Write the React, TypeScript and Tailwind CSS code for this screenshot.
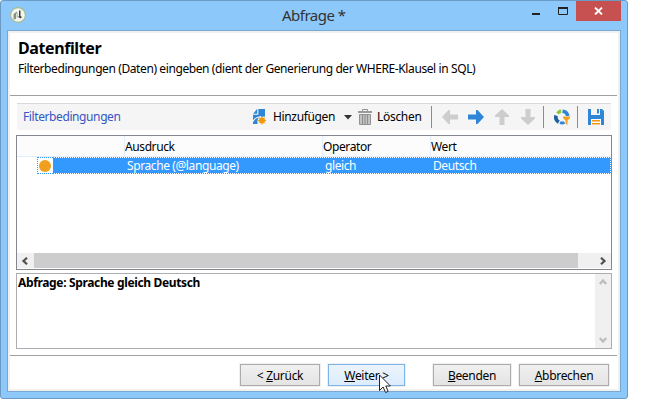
import type { ReactNode } from "react";

function AppIcon() {
  return (
    <svg width="16" height="16" viewBox="0 0 16 16">
      <circle cx="8" cy="8" r="7.4" fill="#f6f6f1" stroke="#a3b98a" strokeWidth="1.1" />
      <path d="M3.500 7 7 4.500v1.500l-1 1v5L3.500 12.500z" fill="#8b8f88" />
      <path d="M6.500 6.500 8 5.500v4.500l-1.500 1.500z" fill="#c3c6bf" />
      <path d="M9 3.500h1.500V9l1.500 1-1.500 1.500L7.500 9.500H9z" fill="#3d423d" />
    </svg>
  );
}

function AddIcon() {
  return (
    <svg width="14" height="16" viewBox="0 0 14 16">
      <path d="M4 0h8v15H0V5z" fill="#2f86d6" />
      <path d="M4.800 0v5.300H0" fill="none" stroke="#f5f5f5" strokeWidth="1.100" />
      <path d="M0 12.500C1.500 9 4 8 8 7.500" fill="none" stroke="#f5f5f5" strokeWidth="1.200" />
      <path d="M4.500 15.500V11L6 8l6.500-.5v8z" fill="#f5f5f5" />
      <circle cx="9" cy="11.500" r="3" fill="#f09a0a" />
      <path d="M9 7.500v8M5 11.500h8M6.200 8.700l5.600 5.600M11.800 8.700l-5.600 5.600" stroke="#f09a0a" strokeWidth="1" />
    </svg>
  );
}

function TrashIcon() {
  return (
    <svg width="14" height="16" viewBox="0 0 14 16">
      <path d="M4.500 2.500v-2h5v2" fill="none" stroke="#929292" />
      <path d="M0 2h14v2H0z" fill="#9a9a9a" />
      <path d="M1.500 5.500h11v10h-11z" fill="#c4c4c4" stroke="#929292" />
      <path d="M4.500 6v9M7 6v9M9.500 6v9" stroke="#8f8f8f" strokeWidth="1.100" />
    </svg>
  );
}

function Arrow({ color, angle }: { color: string; angle: number }) {
  return (
    <svg width="16" height="16" viewBox="0 0 16 16">
      <path transform={`rotate(${angle} 8 8)`} d="M0 5.500h8V1h1.500L16 8l-6.500 7H8v-4.500H0z" fill={color} />
    </svg>
  );
}

function RefreshFilterIcon() {
  return (
    <svg width="16" height="16" viewBox="0 0 16 16">
      <path d="M8.500 2.200A6 6 0 0 1 13.800 7" fill="none" stroke="#2f86d6" strokeWidth="3.600" />
      <path d="M2 6.500a6 6 0 0 0 2.800 6.600" fill="none" stroke="#205f9f" strokeWidth="3.600" />
      <path d="M6 13.700a6 6 0 0 0 4.500-.2" fill="none" stroke="#2f86d6" strokeWidth="3" />
      <path d="M2.200 3.500 5 .8 7.200.5V4L4.500 5.200z" fill="#8cc63f" />
      <path d="M9 7.500h7v1.500l-2.500 2.500V16l-2-1.500v-3L9 9z" fill="#f4a11f" />
    </svg>
  );
}

function SaveIcon() {
  return (
    <svg width="16" height="16" viewBox="0 0 16 16">
      <path d="M0 0h3v6h9V0h2l2 2v14H0z" fill="#2f86d6" />
      <path d="M9 0h2v4.500H9z" fill="#2f86d6" />
      <path d="M3 10h10v6H3z" fill="#fff" />
      <path d="M4 11h8v1.500H4zM4 14h8v1.500H4z" fill="#f4970e" />
    </svg>
  );
}

function Chevron({ color, angle }: { color: string; angle: number }) {
  return (
    <svg width="8" height="8" viewBox="0 0 8 8">
      <path transform={`rotate(${angle} 4 4)`} d="M6 0.800 2.500 4 6 7.200" fill="none" stroke={color} strokeWidth="2.200" />
    </svg>
  );
}

function Separator() {
  return <div className="h-[22px] w-px shrink-0 bg-[#8c8c8c]" />;
}

function Button({ className, children }: { className: string; children: ReactNode }) {
  return (
    <button
      className={`h-[22px] shrink-0 border leading-[19px] whitespace-nowrap shadow-[0_0_0_1px_#f0f0f0] ${className}`}
    >
      {children}
    </button>
  );
}

const grey = "border-[#acacac] bg-linear-to-b from-[#f0f0f0] to-[#e4e4e4]";

export default function App() {
  return (
    <div className="h-[416px] w-[646px] overflow-hidden bg-white font-['Noto_Sans','Open_Sans',sans-serif] text-[12px] tracking-[-0.4px] text-black">
      <div className="flex h-[399px] w-[628px] flex-col rounded-[3px] border border-[#6b9ac4] bg-[#8dc8fa] px-[6px] pb-[6px]">
        <header className="flex h-[29px] shrink-0 items-start">
          <div className="ml-[3px] pt-[6px]"><AppIcon /></div>
          <h1 className="ml-[256px] w-[250px] pt-[4px] text-[15px] leading-[20px] tracking-[-0.5px] text-[#333]">Abfrage *</h1>
          <svg className="mt-[5px] shrink-0" width="38" height="12" viewBox="0 0 38 12">
            <path d="M0 7h8v2H0z" fill="#222" />
            <path d="M26.500 2.500h9v6h-9z" fill="none" stroke="#222" />
            <path d="M26 1h10v2H26z" fill="#222" />
          </svg>
          <div className="ml-auto flex h-[20px] w-[45px] shrink-0 items-center justify-center bg-[#c75050]">
            <svg width="9" height="8" viewBox="0 0 9 8"><path d="M1 .5 8 7.500M8 .5 1 7.500" stroke="#fff" strokeWidth="1.800" /></svg>
          </div>
        </header>

        <main className="flex w-[614px] flex-1 flex-col border border-[#79a9d2] bg-[#f0f0f0] p-[2px]">
          <div className="flex flex-1 flex-col bg-white">
            <section className="mr-[1px] h-[63px] border-b border-[#a0a0a0] pl-[8px]">
              <h2 className="pt-[5px] text-[16px] leading-[20px] font-bold">Datenfilter</h2>
              <p className="mt-[3px] leading-[16px] whitespace-nowrap">
                Filterbedingungen (Daten) eingeben (dient der Generierung der WHERE-Klausel in SQL)
              </p>
            </section>

            <section className="mt-[7px] ml-[7px] flex h-[27px] w-[594px] items-center border-t border-[#d9d9d9] bg-[#f5f5f5]">
              <span className="ml-[6px] w-[230px] text-[#3455c4]">Filterbedingungen</span>
              <AddIcon />
              <span className="ml-[6px] w-[71px] tracking-[-0.35px]">Hinzufügen</span>
              <svg width="8" height="5" viewBox="0 0 8 5"><path d="M0 0h8L4 4.500z" fill="#333" /></svg>
              <div className="ml-[6px]"><TrashIcon /></div>
              <span className="ml-[5px] w-[54px] tracking-[-0.3px]">Löschen</span>
              <Separator />
              <div className="ml-[10px] flex gap-[10px]">
                <Arrow color="#cdcdcd" angle={180} />
                <Arrow color="#2f86d6" angle={0} />
                <Arrow color="#cdcdcd" angle={-90} />
                <Arrow color="#cdcdcd" angle={90} />
              </div>
              <div className="ml-[7px] flex items-center gap-[10px]">
                <Separator />
                <RefreshFilterIcon />
              </div>
              <div className="ml-[7px] flex items-center gap-[10px]">
                <Separator />
                <SaveIcon />
              </div>
            </section>

            <section className="mt-[5px] ml-[6px] flex h-[135px] w-[596px] flex-col border border-[#828790]">
              <div className="flex h-[21px] shrink-0 border-b border-[#e2eefb] bg-[#fcfcfc] leading-[22px]">
                <div className="w-[108px] border-r border-[#e2eefb]" />
                <div className="w-[198px] border-r border-[#e2eefb]">Ausdruck</div>
                <div className="w-[108px] border-r border-[#e2eefb]">Operator</div>
                <div>Wert</div>
              </div>
              <div className="ml-[20px] flex h-[17px] shrink-0 border border-dotted border-white bg-[#3399ff] leading-[16px] text-white">
                <div className="-my-px -ml-px flex w-[16px] items-center border border-r-0 border-dotted border-[#3399ff] bg-white pl-[1px]">
                  <div className="h-[12px] w-[12px] rounded-full bg-[#f0a01e]" />
                </div>
                <span className="ml-[74px] w-[198px]">Sprache (@language)</span>
                <span className="w-[108px]">gleich</span>
                <span>Deutsch</span>
              </div>
              <div className="mt-auto mb-[1px] flex h-[15px] items-center bg-[#f0f0f0]">
                <div className="flex w-[17px] pl-[4px]"><Chevron color="#505050" angle={0} /></div>
                <div className="h-full w-[544px] bg-[#cdcdcd]" />
                <div className="ml-[21px]"><Chevron color="#505050" angle={180} /></div>
              </div>
            </section>

            <section className="mt-[3px] ml-[6px] flex h-[76px] w-[596px] justify-between border border-[#abadb3]">
              <p className="pl-[1px] leading-[18px] font-bold tracking-[-0.35px]">Abfrage: Sprache gleich Deutsch</p>
              <div className="flex w-[16px] flex-col items-center justify-between bg-[#f0f0f0] py-[4px]">
                <Chevron color="#bcbcbc" angle={90} />
                <Chevron color="#bcbcbc" angle={-90} />
              </div>
            </section>

            <footer className="mt-[6px] mr-[1px] flex border-t border-[#a0a0a0] pt-[8px] pl-[230px] tracking-[-0.3px]">
              <Button className={`w-[80px] ${grey}`}>&lt; <u>Z</u>urück</Button>
              <div className="relative ml-[8px]">
                <Button className="w-[77px] border-[#7eb4ea] bg-linear-to-b from-[#ecf4fc] to-[#dcecfc]"><u>W</u>eiter &gt;</Button>
                <svg className="absolute top-[10px] left-[51px]" width="12" height="20" viewBox="0 0 12 20">
                  <path d="M.5 1v15.500l3.600-3.500 2.500 5.500 2.500-1.100L6.800 12h4.600z" fill="#fff" stroke="#222" />
                </svg>
              </div>
              <Button className={`ml-[28px] w-[78px] ${grey}`}><u>B</u>eenden</Button>
              <Button className={`ml-[8px] w-[90px] ${grey}`}><u>A</u>bbrechen</Button>
            </footer>
          </div>
        </main>
      </div>
    </div>
  );
}
